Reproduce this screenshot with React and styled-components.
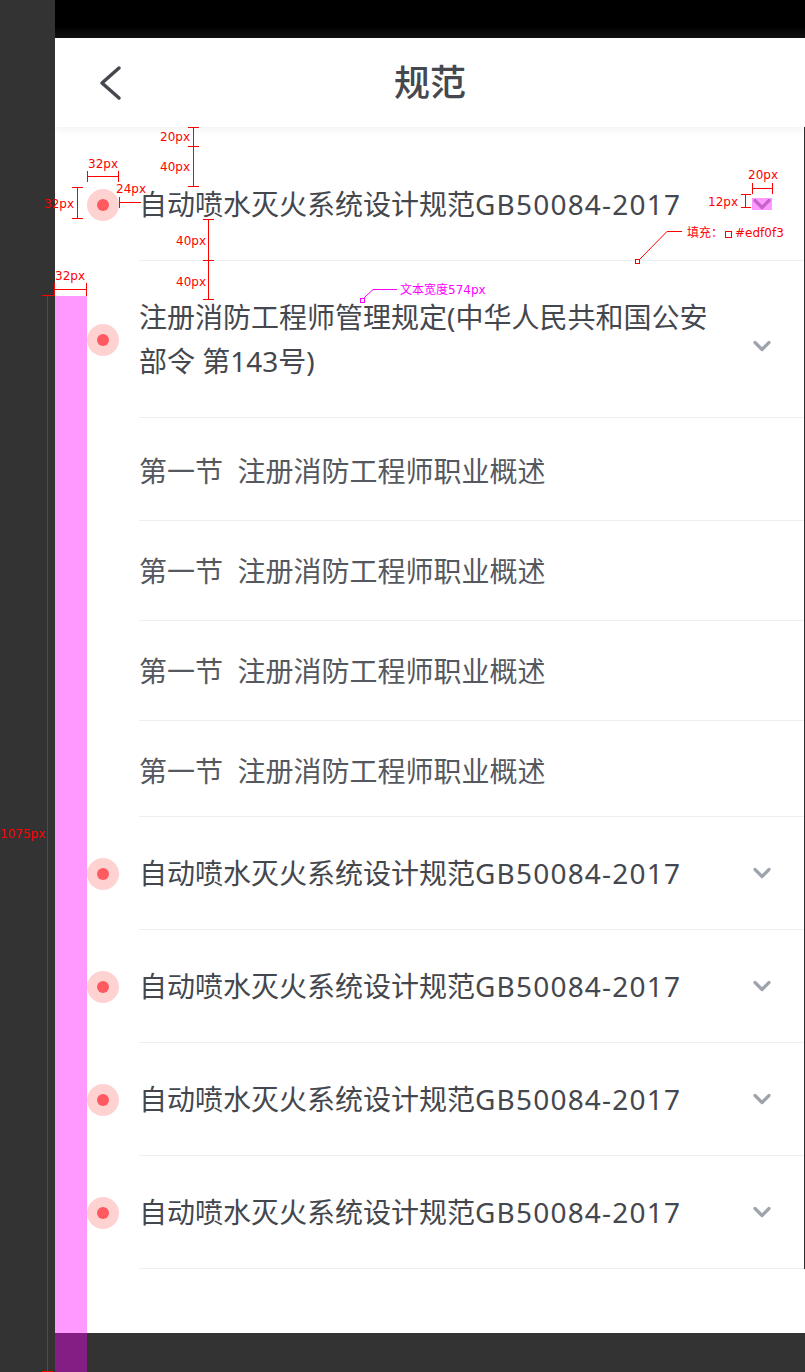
import React from 'react';
import styled, { createGlobalStyle } from 'styled-components';

const GlobalStyle = createGlobalStyle`
  html, body {
    margin: 0;
    padding: 0;
    background: #333333;
  }
  body {
    font-family: "Noto Sans", "Noto Sans CJK SC", sans-serif;
  }
  * {
    box-sizing: border-box;
  }
`;

const Page = styled.div`
  position: relative;
  width: 805px;
  height: 1372px;
  background: #333333;
  overflow: hidden;
`;

const Device = styled.div`
  width: 750px;
  margin-left: 55px;
  display: flex;
  flex-direction: column;
`;

const StatusBar = styled.div`
  height: 38px;
  background: linear-gradient(180deg, #000 0%, #000 70%, #121212 100%);
`;

const Screen = styled.div`
  height: 1295px;
  background: #fff;
  display: flex;
  flex-direction: column;
`;

const Header = styled.header`
  position: relative;
  z-index: 1;
  flex: none;
  height: 89px;
  display: grid;
  grid-template-columns: 1fr auto 1fr;
  align-items: center;
  background: #fff;
  box-shadow: 0 3px 8px rgba(0, 0, 0, 0.05);
`;

const BackButton = styled.button`
  justify-self: start;
  margin-left: 44px;
  padding: 0;
  border: 0;
  background: none;
  display: flex;
`;

const Title = styled.h1`
  margin: 0;
  font-size: 36px;
  line-height: 1;
  font-weight: 500;
  color: #45484e;
`;

const List = styled.div`
  padding-top: 21px;
  border-right: 1px solid #2f2f2f;
`;

const Row = styled.div`
  display: flex;
  align-items: center;
  padding-left: 32px;
`;

const Marker = styled.span`
  flex: none;
  width: 32px;
  height: 32px;
  margin-right: 20px;
  border-radius: 50%;
  background: #ffd2d2;
  display: flex;
  align-items: center;
  justify-content: center;

  &::after {
    content: '';
    width: 12px;
    height: 12px;
    border-radius: 50%;
    background: #ff5a5f;
  }
`;

const RowBody = styled.div`
  flex: 1;
  display: flex;
  align-items: center;
  justify-content: space-between;
  padding: 34px 32px 34px 0;
  border-bottom: 1px solid #edf0f3;
`;

const RowTitle = styled.div`
  width: 574px;
  font-size: 28px;
  line-height: 44px;
  color: #44474d;
`;

const Code = styled.span`
  letter-spacing: 1.2px;
`;

const Toggle = styled.span`
  position: relative;
  flex: none;
  width: 20px;
  height: 12px;
  display: block;
  margin-top: ${(p) => (p.$multiline ? '14px' : '0')};

  svg {
    display: block;
  }

  &::after {
    content: '';
    position: absolute;
    inset: 0;
    background: ${(p) => (p.$marked ? 'rgba(255, 0, 255, 0.4)' : 'transparent')};
  }
`;

const SubList = styled.div`
  padding-top: 3px;
`;

const SubRow = styled.div`
  margin-left: 84px;
  height: 100px;
  padding-top: 31px;
  font-size: 28px;
  line-height: 38px;
  color: #55585e;
  white-space: pre;
  border-bottom: 1px solid #edf0f3;

  &:last-child {
    height: 96px;
  }
`;

const Overlay = styled.svg`
  position: absolute;
  left: 0;
  top: 0;
  pointer-events: none;
`;

const Note = styled.span`
  position: absolute;
  left: ${(p) => p.$x}px;
  top: ${(p) => p.$y}px;
  font-family: "DejaVu Sans", "Noto Sans CJK SC", sans-serif;
  font-size: 12px;
  line-height: 14px;
  white-space: nowrap;
  color: ${(p) => p.$color || '#ff0000'};
  pointer-events: none;
`;

const Swatch = styled.span`
  display: inline-block;
  width: 7px;
  height: 7px;
  margin: 0 3px 0 2px;
  border: 1px solid #ff0000;
  vertical-align: -1px;
`;

const Chevron = () => (
  <svg width="20" height="12" viewBox="0 0 20 12">
    <polyline
      points="3,2.5 10,9.5 17,2.5"
      fill="none"
      stroke="#9ea4ad"
      strokeWidth="3.2"
      strokeLinecap="round"
      strokeLinejoin="round"
    />
  </svg>
);

const BackIcon = () => (
  <svg width="24" height="36" viewBox="0 0 24 36">
    <polyline
      points="20,3 3,18 20,33"
      fill="none"
      stroke="#45484e"
      strokeWidth="3.5"
      strokeLinecap="round"
      strokeLinejoin="round"
    />
  </svg>
);

const SECTION = '第一节  注册消防工程师职业概述';

// dimension marks of the design spec, [x1, y1, x2, y2]
const redLines = [
  [193.5, 127, 193.5, 187], [188, 127.5, 199, 127.5], [188, 146.5, 199, 146.5], [188, 186.5, 199, 186.5],
  [87, 176.5, 119, 176.5], [87.5, 171, 87.5, 182], [118.5, 171, 118.5, 182],
  [77.5, 187, 77.5, 219], [72, 187.5, 83, 187.5], [72, 218.5, 83, 218.5],
  [119, 202.5, 141, 202.5], [119.5, 197, 119.5, 208],
  [208.5, 219, 208.5, 300], [203, 219.5, 214, 219.5], [203, 260.5, 214, 260.5], [203, 299.5, 214, 299.5],
  [54, 289.5, 87, 289.5], [54.5, 283, 54.5, 296], [86.5, 283, 86.5, 296],
  [47.5, 295, 47.5, 1372], [42, 295.5, 55, 295.5], [42, 1371.5, 53, 1371.5],
  [752, 188.5, 773, 188.5], [752.5, 183, 752.5, 194], [772.5, 183, 772.5, 194],
  [745.5, 194, 745.5, 208], [741, 194.5, 751, 194.5], [741, 207.5, 751, 207.5],
];

const notes = [
  { x: 160, y: 130, text: '20px' },
  { x: 160, y: 160, text: '40px' },
  { x: 88, y: 157, text: '32px' },
  { x: 44, y: 197, text: '32px' },
  { x: 116, y: 182, text: '24px' },
  { x: 176, y: 234, text: '40px' },
  { x: 176, y: 275, text: '40px' },
  { x: 55, y: 269, text: '32px' },
  { x: 0, y: 827, text: '1075px' },
  { x: 748, y: 168, text: '20px' },
  { x: 708, y: 195, text: '12px' },
];

function Annotations() {
  return (
    <>
      <Overlay width="805" height="1372" viewBox="0 0 805 1372" shapeRendering="crispEdges">
        <rect x="55" y="296" width="32" height="1076" fill="rgba(255, 0, 255, 0.4)" />
        {redLines.map(([x1, y1, x2, y2], i) => (
          <line key={i} x1={x1} y1={y1} x2={x2} y2={y2} stroke="#ff0000" strokeWidth="1" />
        ))}
        <rect x="635.5" y="259.5" width="4" height="4" fill="#fff" stroke="#ff0000" />
        <polyline points="639,260 667,231.5 682,231.5" fill="none" stroke="#ff0000" shapeRendering="auto" />
        <rect x="360.5" y="298.5" width="4" height="4" fill="#fff" stroke="#ff00ff" />
        <polyline points="364,298 373,289.5 397,289.5" fill="none" stroke="#ff00ff" shapeRendering="auto" />
      </Overlay>
      {notes.map((n, i) => (
        <Note key={i} $x={n.x} $y={n.y}>{n.text}</Note>
      ))}
      <Note $x={687} $y={226}>
        填充：<Swatch />#edf0f3
      </Note>
      <Note $x={400} $y={283} $color="#ff00ff">文本宽度574px</Note>
    </>
  );
}

function MainRow({ children, marked, multiline }) {
  return (
    <Row>
      <Marker />
      <RowBody>
        <RowTitle>{children}</RowTitle>
        <Toggle $marked={marked} $multiline={multiline}>
          <Chevron />
        </Toggle>
      </RowBody>
    </Row>
  );
}

const GbRow = ({ marked }) => (
  <MainRow marked={marked}>
    自动喷水灭火系统设计规范<Code>GB50084-2017</Code>
  </MainRow>
);

export default function App() {
  return (
    <Page>
      <GlobalStyle />
      <Device>
        <StatusBar />
        <Screen>
          <Header>
            <BackButton aria-label="返回">
              <BackIcon />
            </BackButton>
            <Title>规范</Title>
            <span />
          </Header>
          <List>
            <GbRow marked />
            <MainRow multiline>注册消防工程师管理规定(中华人民共和国公安部令 第143号)</MainRow>
            <SubList>
              <SubRow>{SECTION}</SubRow>
              <SubRow>{SECTION}</SubRow>
              <SubRow>{SECTION}</SubRow>
              <SubRow>{SECTION}</SubRow>
            </SubList>
            <GbRow />
            <GbRow />
            <GbRow />
            <GbRow />
          </List>
        </Screen>
      </Device>
      <Annotations />
    </Page>
  );
}
